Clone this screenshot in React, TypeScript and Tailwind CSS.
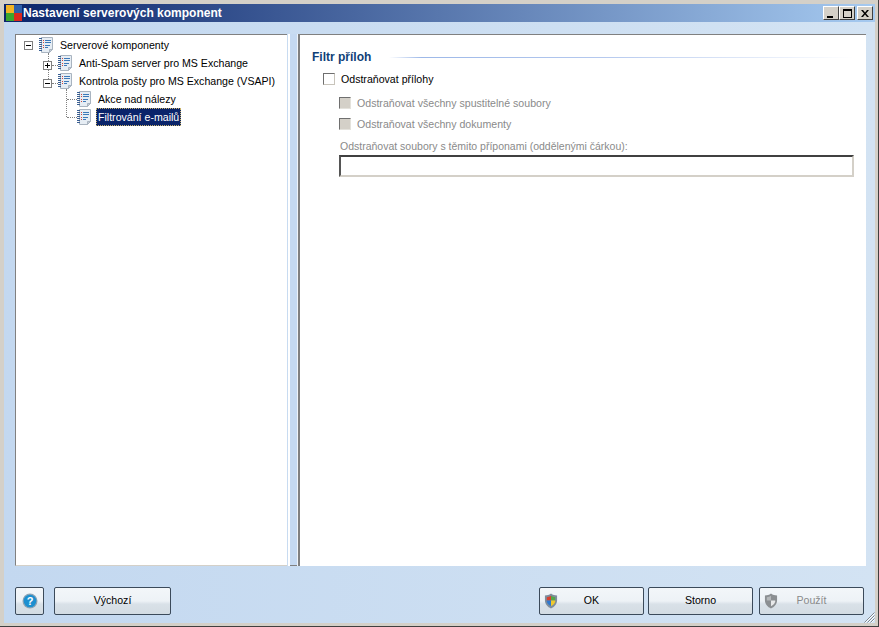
import React from "react";

const font = "font-['Liberation_Sans',Arial,sans-serif]";

function DocIcon() {
  return (
    <svg width="15" height="16" viewBox="0 0 15 16" className="shrink-0">
      <path d="M2.5 .5H13.5V12.5L10.5 15.5H2.5Z" fill="#e6edf4" stroke="#a9b4c0" />
      <path d="M13.5 12.5H10.5V15.5Z" fill="#c3ccd6" stroke="#a9b4c0" />
      <g fill="#3a5f92">
        <rect x="0" y="1" width="3" height="1" />
        <rect x="0" y="3" width="3" height="1" />
        <rect x="0" y="5" width="3" height="1" />
        <rect x="0" y="7" width="3" height="1" />
        <rect x="0" y="9" width="3" height="1" />
        <rect x="0" y="11" width="3" height="1" />
        <rect x="0" y="13" width="3" height="1" />
      </g>
      <rect x="4" y="3" width="1" height="1" fill="#d4463c" />
      <rect x="4" y="5" width="1" height="1" fill="#d4463c" />
      <rect x="4" y="8" width="1" height="1" fill="#d4463c" />
      <rect x="4" y="10" width="1" height="1" fill="#d4463c" />
      <rect x="6" y="3" width="6" height="1" fill="#3c79b8" />
      <rect x="6" y="5" width="6" height="1" fill="#3c79b8" />
      <rect x="6" y="8" width="5" height="1" fill="#3c79b8" />
      <rect x="6" y="10" width="3" height="1" fill="#3c79b8" />
    </svg>
  );
}

function Expander({ open }: { open: boolean }) {
  return (
    <svg width="9" height="9" viewBox="0 0 9 9" className="shrink-0">
      <rect x=".5" y=".5" width="8" height="8" fill="#fff" stroke="#808080" />
      <rect x="2" y="4" width="5" height="1" fill="#000" />
      {!open && <rect x="4" y="2" width="1" height="5" fill="#000" />}
    </svg>
  );
}

function TreeRow({
  indent,
  expander,
  expanderClass,
  label,
  selected,
  lines,
}: {
  indent: string;
  expander?: "open" | "closed";
  expanderClass?: string;
  label: string;
  selected?: boolean;
  lines?: React.ReactNode;
}) {
  return (
    <div className={`relative flex h-[18px] items-center ${indent}`}>
      {lines}
      <div className={`flex w-[15px] shrink-0 items-center ${expanderClass ?? ""}`}>
        {expander && <Expander open={expander === "open"} />}
      </div>
      <DocIcon />
      {selected ? (
        <span className="ml-[4px] h-[18px] whitespace-nowrap border border-dotted border-[#c9b26a] bg-[#0a246a] px-[1px] text-[10.6px] leading-[16px] text-white">
          {label}
        </span>
      ) : (
        <span className="ml-[4px] h-[16px] whitespace-nowrap px-[2px] text-[10.6px] leading-[16px] text-black">
          {label}
        </span>
      )}
    </div>
  );
}

function DotV({ className }: { className: string }) {
  return <div className={`absolute w-0 border-l border-dotted border-[#808080] ${className}`} />;
}
function DotH({ className }: { className: string }) {
  return <div className={`absolute h-0 border-t border-dotted border-[#808080] ${className}`} />;
}

function Shield({ gray }: { gray?: boolean }) {
  return (
    <svg width="14" height="16" viewBox="0 0 15 17" className="absolute left-[4px] top-[5px]">
      <path d="M7.5 .5C9.5 2 11.5 2.6 14 2.6V8C14 12 11 15 7.5 16.5 4 15 1 12 1 8V2.6C3.5 2.6 5.5 2 7.5 .5Z" fill={gray ? "#8b8f92" : "#7f8d9c"} />
      {gray ? (
        <>
          <path d="M7.5 3V8H3V4.5C4.8 4.3 6.2 3.8 7.5 3Z" fill="#b5b8ba" />
          <path d="M7.5 8H12V9C11.6 11 9.8 13 7.5 14Z" fill="#e8e9ea" />
        </>
      ) : (
        <>
          <path d="M7.5 3V8H3V4.5C4.8 4.3 6.2 3.8 7.5 3Z" fill="#d8412f" />
          <path d="M7.5 3C8.8 3.8 10.2 4.3 12 4.5V8H7.5Z" fill="#52a747" />
          <path d="M3 8H7.5V14C5.2 13 3.4 11 3 9Z" fill="#2f79cf" />
          <path d="M7.5 8H12V9C11.6 11 9.8 13 7.5 14Z" fill="#f0c92f" />
        </>
      )}
    </svg>
  );
}

function Btn({
  width,
  label,
  disabled,
  icon,
}: {
  width: string;
  label?: string;
  disabled?: boolean;
  icon?: React.ReactNode;
}) {
  return (
    <button
      className={`relative flex h-[28px] ${width} items-center justify-center rounded-[2px] border border-[#3b4a5a] bg-[linear-gradient(#f3f6f9_0%,#edf2f6_50%,#d9e1e8_62%,#d3dce3_100%)] text-[10.6px] ${
        disabled ? "text-[#8a8a8a]" : "text-black"
      }`}
    >
      {icon}
      {label}
    </button>
  );
}

export default function App() {
  return (
    <div className={`flex h-[627px] w-[879px] flex-col overflow-hidden border-b border-r border-b-[#404040] border-r-[#404040] bg-[#d4d0c8] ${font}`}>
      <div className="flex min-h-0 flex-1 flex-col pb-[3px] pl-[4px] pr-[3px] pt-[4px]">
        {/* title bar */}
        <div className="flex h-[18px] shrink-0 items-center bg-[linear-gradient(90deg,#0a246a,#a6caf0)] pr-[2px]">
          <svg width="16" height="16" viewBox="0 0 16 16" className="ml-[2px] shrink-0">
            <rect x="0" y="0" width="8" height="8" fill="#f2b423" />
            <rect x="8" y="0" width="8" height="8" fill="#2e5fa8" />
            <rect x="0" y="8" width="8" height="8" fill="#3aa52e" />
            <rect x="8" y="8" width="8" height="8" fill="#d9281e" />
          </svg>
          <span className="ml-[1px] flex-1 whitespace-nowrap text-[12px] font-bold leading-[18px] text-white">
            Nastavení serverových komponent
          </span>
          <div className="flex">
            {["min", "max"].map((k) => (
              <div key={k} className="flex h-[14px] w-[16px] items-center justify-center border-b border-r border-b-[#404040] border-r-[#404040] border-l border-t border-l-white border-t-white bg-[#d4d0c8]">
                {k === "min" ? (
                  <div className="mt-[7px] ml-[-2px] h-[2px] w-[6px] bg-black" />
                ) : (
                  <div className="h-[9px] w-[9px] border border-t-2 border-black" />
                )}
              </div>
            ))}
            <div className="ml-[2px] flex h-[14px] w-[16px] items-center justify-center border-b border-r border-b-[#404040] border-r-[#404040] border-l border-t border-l-white border-t-white bg-[#d4d0c8]">
              <svg width="8" height="7" viewBox="0 0 8 7">
                <path d="M0 0H2L4 2.5 6 0H8L5 3.5 8 7H6L4 4.5 2 7H0L3 3.5Z" fill="#000" />
              </svg>
            </div>
          </div>
        </div>

        {/* client */}
        <div className="relative flex min-h-0 flex-1 flex-col bg-[linear-gradient(90deg,#c3d8f0,#d3e3f3)] pl-[11px] pr-[9px] pt-[12px]">
          <div className="flex h-[532px] shrink-0">
            {/* tree */}
            <div className="h-full w-[272px] shrink-0 border-l border-t border-b border-l-[#808080] border-t-[#808080] border-b-[#d4d0c8] bg-white pt-[1px]">
              <div className="relative pl-[8px]">
                <DotV className="left-[32px] top-[17px] h-[8px]" />
                <DotV className="left-[32px] top-[33px] h-[10px]" />
                <DotV className="left-[50px] top-[53px] h-[28px]" />
                <TreeRow indent="pl-0" expander="open" expanderClass="mt-[1px]" label="Serverové komponenty" />
                <TreeRow indent="pl-[19px]" expander="closed" expanderClass="mt-[4px]" label="Anti-Spam server pro MS Exchange" lines={<DotH className="left-[28px] top-[11px] w-[6px]" />} />
                <TreeRow indent="pl-[19px]" expander="open" expanderClass="mt-[4px]" label="Kontrola pošty pro MS Exchange (VSAPI)" lines={<DotH className="left-[28px] top-[11px] w-[6px]" />} />
                <TreeRow indent="pl-[38px]" label="Akce nad nálezy" lines={<DotH className="left-[43px] top-[9px] w-[10px]" />} />
                <TreeRow indent="pl-[38px]" label="Filtrování e-mailů" selected lines={<DotH className="left-[43px] top-[9px] w-[10px]" />} />
              </div>
            </div>

            {/* splitter */}
            <div className="flex h-full w-[12px] shrink-0">
              <div className="ml-[1px] w-[2px] bg-white" />
              <div className="w-[7px] border-b border-b-[#808080] bg-[#c5d9f1]" />
              <div className="w-[1px] bg-[#eef3f9]" />
              <div className="w-[1px] bg-[#808080]" />
            </div>

            {/* right panel */}
            <div className="h-full flex-1 border-l border-t border-l-[#808080] border-t-[#808080] bg-white pl-[12px] pr-[12px] pt-[15px]">
              <div className="flex h-[14px] items-center">
                <span className="whitespace-nowrap text-[12px] font-bold leading-[14px] text-[#0f3f77]">Filtr příloh</span>
                <div className="ml-[18px] mt-[1px] h-px flex-1 bg-[linear-gradient(90deg,#ffffff,#9db8e8_7%,#b4c8ee_45%,#ffffff_100%)]" />
              </div>
              <label className="ml-[11px] mt-[7px] flex h-[16px] items-center">
                <span className="h-[12px] w-[12px] shrink-0 border border-[#6f6f6f] border-r-[#c8c4bb] border-b-[#c8c4bb] bg-white" />
                <span className="ml-[6px] whitespace-nowrap text-[10.6px] leading-[16px] text-black">Odstraňovat přílohy</span>
              </label>
              <div className="ml-[27px] mt-[8px] flex h-[16px] items-center">
                <span className="h-[12px] w-[12px] shrink-0 border border-[#6f6f6f] border-r-[#e4e2dc] border-b-[#e4e2dc] bg-[#d4d0c8]" />
                <span className="ml-[6px] whitespace-nowrap text-[10.6px] leading-[16px] text-[#8a8a8a]">Odstraňovat všechny spustitelné soubory</span>
              </div>
              <div className="ml-[27px] mt-[5px] flex h-[16px] items-center">
                <span className="h-[12px] w-[12px] shrink-0 border border-[#6f6f6f] border-r-[#e4e2dc] border-b-[#e4e2dc] bg-[#d4d0c8]" />
                <span className="ml-[6px] whitespace-nowrap text-[10.6px] leading-[16px] text-[#8a8a8a]">Odstraňovat všechny dokumenty</span>
              </div>
              <div className="ml-[28px] mt-[7px] h-[14px] whitespace-nowrap text-[10.5px] leading-[14px] text-[#8a8a8a]">
                Odstraňovat soubory s těmito příponami (oddělenými čárkou):
              </div>
              <div className="ml-[27px] mt-[2px] h-[22px] border-2 border-[#d4d0c8] border-l-[#555555] border-t-[#404040] border-r-[#d4d0c8] border-b-[#d4d0c8] bg-white" />
            </div>
          </div>

          {/* footer */}
          <div className="mr-[2px] mt-[21px] flex items-start">
            <Btn
              width="w-[29px]"
              icon={
                <svg width="16" height="16" viewBox="0 0 16 16">
                  <circle cx="8" cy="8" r="7.5" fill="#8ba3b5" />
                  <circle cx="8" cy="8" r="6.3" fill="#1c8fd0" />
                  <text x="8" y="12" textAnchor="middle" fontSize="11" fontWeight="700" fontFamily="Liberation Sans" fill="#fff">?</text>
                </svg>
              }
            />
            <div className="ml-[10px]">
              <Btn width="w-[117px]" label="Výchozí" />
            </div>
            <div className="ml-auto flex gap-[4px]">
              <Btn width="w-[105px]" label="OK" icon={<Shield />} />
              <Btn width="w-[105px]" label="Storno" />
              <div className="ml-[2px]">
                <Btn width="w-[105px]" label="Použít" disabled icon={<Shield gray />} />
              </div>
            </div>
          </div>

          {/* resize grip */}
          <svg width="12" height="12" viewBox="0 0 12 12" className="absolute bottom-0 right-0">
            <path d="M11.5 1.5L1.5 11.5M11.5 4.5L4.5 11.5M11.5 7.5L7.5 11.5" stroke="#7d8790" fill="none" />
            <path d="M11.5 2.5L2.5 11.5M11.5 5.5L5.5 11.5M11.5 8.5L8.5 11.5" stroke="#ffffff" fill="none" />
          </svg>
        </div>
      </div>
    </div>
  );
}
